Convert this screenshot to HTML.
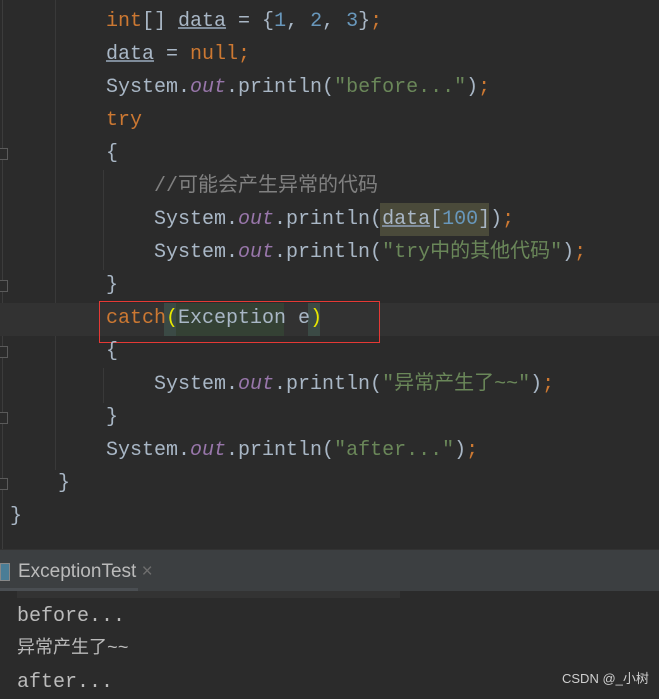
<!DOCTYPE html>
<html><head><meta charset="utf-8"><style>
body{margin:0;width:659px;height:694px;background:#2b2b2b;overflow:hidden;position:relative;font-family:"Liberation Mono","Noto Sans CJK SC",monospace;font-size:20px;color:#a9b7c6}
.l{position:absolute;height:33px;line-height:33px;white-space:pre;overflow:visible}
.l span{line-height:1}
.k{color:#cc7832}.s{color:#6a8759}.n{color:#6897bb}.o{color:#9876aa;font-style:italic}.c{color:#808080}
.u{text-decoration:underline;text-decoration-color:#7f8c9a}
.cj{font-family:"Noto Sans CJK SC",sans-serif;line-height:0!important}
.gl{position:absolute;background:#393939;width:1px}
.fold{position:absolute;left:0;width:7px;height:10px;border:1px solid #5a5a5a;border-left:none;background:#2b2b2b}
</style></head><body>
<div style="position:absolute;left:2px;top:0;width:1px;height:549px;background:#3c3c3c"></div>
<div class="gl" style="left:55px;top:0;height:470px"></div>
<div class="gl" style="left:103px;top:170px;height:100px"></div>
<div class="gl" style="left:103px;top:368px;height:35px"></div>
<div class="fold" style="top:148px"></div>
<div class="fold" style="top:280px"></div>
<div class="fold" style="top:346px"></div>
<div class="fold" style="top:412px"></div>
<div class="fold" style="top:478px"></div>
<div style="position:absolute;left:0;top:303px;width:659px;height:33px;background:#323232"></div>
<div style="position:absolute;left:164px;top:303px;width:12px;height:33px;background:#3b4a45"></div>
<div style="position:absolute;left:176px;top:303px;width:108px;height:33px;background:#344134"></div>
<div style="position:absolute;left:308px;top:303px;width:12px;height:33px;background:#3b4a45"></div>
<div style="position:absolute;left:380px;top:203px;width:109px;height:33px;background:#4a4a3a"></div>
<div style="position:absolute;left:99px;top:301px;width:279px;height:40px;border:1px solid #e53935"></div>
<div class="l" style="left:106px;top:5px"><span class="k">int</span>[] <span class="u">data</span> = {<span class="n">1</span>, <span class="n">2</span>, <span class="n">3</span>}<span class="k">;</span></div>
<div class="l" style="left:106px;top:38px"><span class="u">data</span> = <span class="k">null;</span></div>
<div class="l" style="left:106px;top:71px">System.<span class="o">out</span>.println(<span class="s">"before..."</span>)<span class="k">;</span></div>
<div class="l" style="left:106px;top:104px"><span class="k">try</span></div>
<div class="l" style="left:106px;top:137px">{</div>
<div class="l c" style="left:154px;top:170px">//<span class="cj">可能会产生异常的代码</span></div>
<div class="l" style="left:154px;top:203px">System.<span class="o">out</span>.println(<span class="u">data</span>[<span class="n">100</span>])<span class="k">;</span></div>
<div class="l" style="left:154px;top:236px">System.<span class="o">out</span>.println(<span class="s">"try<span class="cj">中的其他代码</span>"</span>)<span class="k">;</span></div>
<div class="l" style="left:106px;top:269px">}</div>
<div class="l" style="left:106px;top:302px"><span class="k">catch</span><span style="color:#e8e800">(</span>Exception e<span style="color:#e8e800">)</span></div>
<div class="l" style="left:106px;top:335px">{</div>
<div class="l" style="left:154px;top:368px">System.<span class="o">out</span>.println(<span class="s">"<span class="cj">异常产生了</span>~~"</span>)<span class="k">;</span></div>
<div class="l" style="left:106px;top:401px">}</div>
<div class="l" style="left:106px;top:434px">System.<span class="o">out</span>.println(<span class="s">"after..."</span>)<span class="k">;</span></div>
<div class="l" style="left:58px;top:467px">}</div>
<div class="l" style="left:10px;top:500px">}</div>
<div style="position:absolute;left:0;top:549px;width:659px;height:41px;background:#3c3f41;border-top:1px solid #323232"></div>
<div style="position:absolute;left:0;top:563px;width:8px;height:16px;background:#4a7d96;border:1px solid #888"></div>
<div style="position:absolute;left:18px;top:558px;font-family:'Liberation Sans',sans-serif;font-size:19px;color:#bbbbbb;line-height:28px">ExceptionTest <span style="color:#6e6e6e">×</span></div>
<div style="position:absolute;left:0;top:588px;width:138px;height:3px;background:#4a4e52"></div>
<div style="position:absolute;left:17px;top:591px;width:383px;height:7px;background:#333"></div>
<div class="l" style="left:17px;top:600px;color:#bbbbbb">before...</div>
<div class="l" style="left:17px;top:633px;color:#bbbbbb;font-size:18px"><span class="cj">异常产生了</span>~~</div>
<div class="l" style="left:17px;top:666px;color:#bbbbbb">after...</div>
<div style="position:absolute;left:562px;top:668px;font-family:'Liberation Sans','Noto Sans CJK SC',sans-serif;font-size:13px;color:#cfcfcf">CSDN @_小树</div>
</body></html>
